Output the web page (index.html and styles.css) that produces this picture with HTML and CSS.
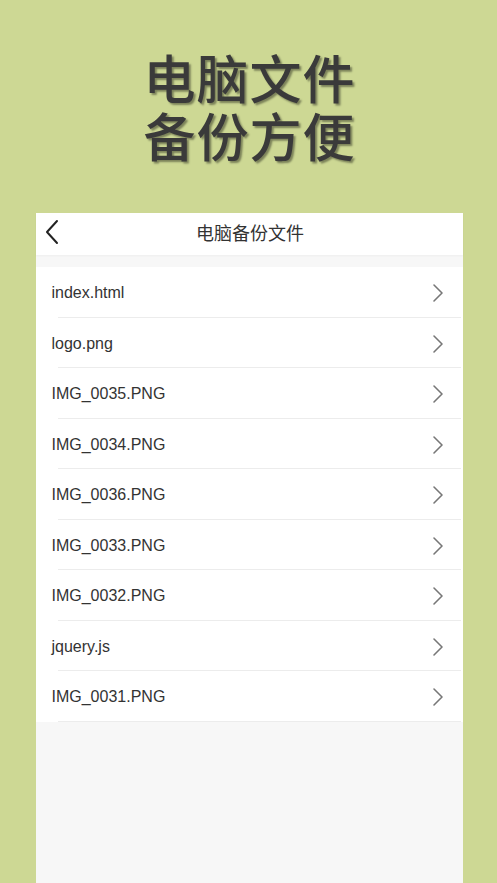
FILE: index.html
```html
<!DOCTYPE html>
<html lang="zh">
<head>
<meta charset="utf-8">
<link rel="stylesheet" href="styles.css">
</head>
<body>
<div class="page">
  <h1 class="headline"><span class="hl-line">电脑文件</span><span class="hl-line">备份方便</span></h1>
  <div class="phone">
    <div class="navbar">
      <svg class="back" width="14" height="26" viewBox="0 0 14 26"><path d="M12 2 L2 13 L12 24" fill="none" stroke="#222" stroke-width="2" stroke-linecap="round" stroke-linejoin="round"/></svg>
      <div class="nav-title">电脑备份文件</div>
    </div>
    <ul class="list">
      <li class="row"><span>index.html</span><svg class="chev" width="12" height="20" viewBox="0 0 12 20"><path d="M2 2 L10 10 L2 18" fill="none" stroke="#777" stroke-width="1.6" stroke-linecap="round" stroke-linejoin="round"/></svg></li>
      <li class="row"><span>logo.png</span><svg class="chev" width="12" height="20" viewBox="0 0 12 20"><path d="M2 2 L10 10 L2 18" fill="none" stroke="#777" stroke-width="1.6" stroke-linecap="round" stroke-linejoin="round"/></svg></li>
      <li class="row"><span>IMG_0035.PNG</span><svg class="chev" width="12" height="20" viewBox="0 0 12 20"><path d="M2 2 L10 10 L2 18" fill="none" stroke="#777" stroke-width="1.6" stroke-linecap="round" stroke-linejoin="round"/></svg></li>
      <li class="row"><span>IMG_0034.PNG</span><svg class="chev" width="12" height="20" viewBox="0 0 12 20"><path d="M2 2 L10 10 L2 18" fill="none" stroke="#777" stroke-width="1.6" stroke-linecap="round" stroke-linejoin="round"/></svg></li>
      <li class="row"><span>IMG_0036.PNG</span><svg class="chev" width="12" height="20" viewBox="0 0 12 20"><path d="M2 2 L10 10 L2 18" fill="none" stroke="#777" stroke-width="1.6" stroke-linecap="round" stroke-linejoin="round"/></svg></li>
      <li class="row"><span>IMG_0033.PNG</span><svg class="chev" width="12" height="20" viewBox="0 0 12 20"><path d="M2 2 L10 10 L2 18" fill="none" stroke="#777" stroke-width="1.6" stroke-linecap="round" stroke-linejoin="round"/></svg></li>
      <li class="row"><span>IMG_0032.PNG</span><svg class="chev" width="12" height="20" viewBox="0 0 12 20"><path d="M2 2 L10 10 L2 18" fill="none" stroke="#777" stroke-width="1.6" stroke-linecap="round" stroke-linejoin="round"/></svg></li>
      <li class="row"><span>jquery.js</span><svg class="chev" width="12" height="20" viewBox="0 0 12 20"><path d="M2 2 L10 10 L2 18" fill="none" stroke="#777" stroke-width="1.6" stroke-linecap="round" stroke-linejoin="round"/></svg></li>
      <li class="row"><span>IMG_0031.PNG</span><svg class="chev" width="12" height="20" viewBox="0 0 12 20"><path d="M2 2 L10 10 L2 18" fill="none" stroke="#777" stroke-width="1.6" stroke-linecap="round" stroke-linejoin="round"/></svg></li>
    </ul>
  </div>
</div>
</body>
</html>
```
FILE: styles.css
```css
* { box-sizing: border-box; }
html, body { margin: 0; padding: 0; }
body {
  background: #cdd894;
  font-family: "Noto Sans CJK SC", "Liberation Sans", sans-serif;
  width: 497px;
  height: 883px;
  overflow: hidden;
}
.page {
  display: flex;
  flex-direction: column;
  align-items: center;
  height: 883px;
}
.headline {
  margin: 48px 0 0 0;
  display: flex;
  flex-direction: column;
  align-items: center;
  font-size: 52px;
  font-weight: 500;
  color: #3a3a3a;
  text-align: center;
  letter-spacing: 1px;
  text-shadow: 2px 2px 2px rgba(0,0,0,0.4);
  height: 165px;
  padding-left: 2px;
}
.hl-line {
  display: block;
  height: 58px;
  line-height: 58px;
}
.phone {
  width: 427px;
  margin-left: 1px;
  flex: 1;
  background: #f7f7f7;
  display: flex;
  flex-direction: column;
}
.navbar {
  height: 42px;
  background: #fff;
  position: relative;
  display: flex;
  align-items: center;
  justify-content: center;
  box-shadow: 0 1px 2px rgba(0,0,0,0.04);
}
.back {
  position: absolute;
  left: 9px;
  top: 6px;
}
.nav-title {
  font-size: 18px;
  color: #333;
  margin-left: 2px;
  margin-bottom: 5px;
}
.list {
  list-style: none;
  margin: 12px 0 0 0;
  padding: 0;
  background: #fff;
}
.row {
  height: 50.5px;
  display: flex;
  align-items: center;
  justify-content: space-between;
  padding: 2px 19px 0 16px;
  font-family: "Liberation Sans", Arial, sans-serif;
  font-size: 16px;
  color: #333;
  position: relative;
}
.row::after {
  content: "";
  position: absolute;
  left: 22px;
  right: 2px;
  bottom: 0;
  height: 1px;
  background: #ececec;
}
.chev { display: block; }
```
